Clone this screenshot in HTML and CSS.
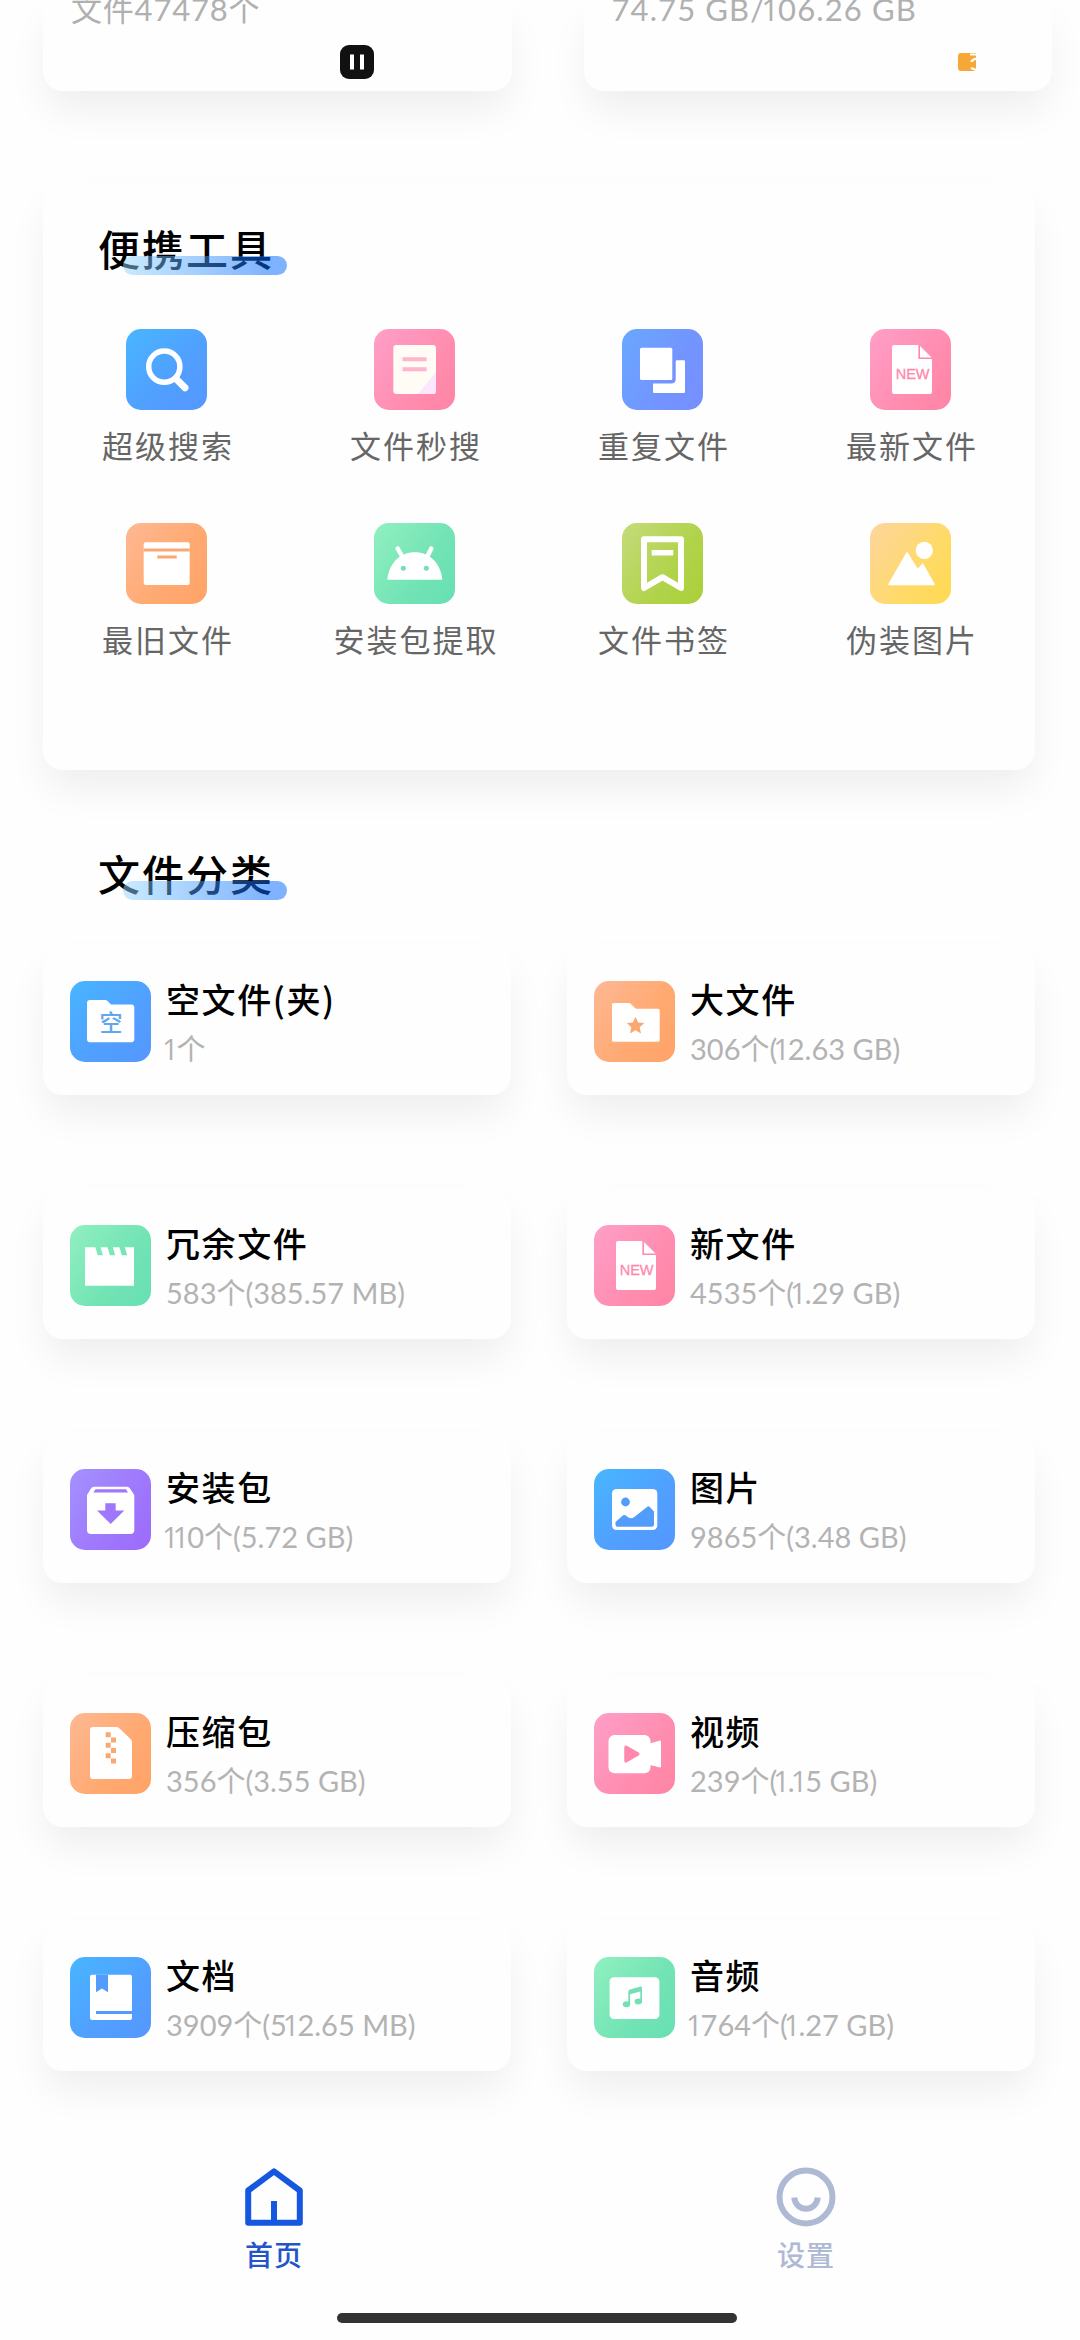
FILE: index.html
```html
<!DOCTYPE html>
<html lang="zh-CN">
<head>
<meta charset="utf-8">
<title>文件管理</title>
<link rel="stylesheet" href="styles.css">
</head>
<body>
<div class="statusbar">
  <svg class="pause" viewBox="0 0 34 34"><rect width="34" height="34" rx="9" fill="#111"/><path d="M10 9.5h4v15h-4zM20 9.5h4v15h-4z" fill="#fff"/></svg>
  <svg class="chip" viewBox="0 0 18 18"><path d="M3 0H18V18H3Q0 18 0 15V3Q0 0 3 0Z" fill="#f5a838"/><path d="M12 1.5H18M18 5.5Q13.5 7 13.5 9M13 15L18 17" stroke="#fff" stroke-width="2.2" fill="none"/></svg>
</div>
<main class="page">
  <section class="summary">
    <div class="card summary-card"><p>文件47478个</p></div>
    <div class="card summary-card total"><p>74.75 GB/<i>1</i>06.26 GB</p></div>
  </section>

  <section class="card tools">
    <h2 class="heading">便携工具</h2>
    <div class="tool-grid">
      <div class="tool"><svg class="icon blue" viewBox="0 0 81 81"><circle cx="38.3" cy="37.7" r="15.6"/><path d="M50 49.8L59 58.7"/></svg><span>超级搜索</span></div>
      <div class="tool"><svg class="icon pink" viewBox="0 0 81 81"><rect x="19.3" y="16" width="42.7" height="49" rx="3" fill="#fffbf5"/><path d="M62 43V62Q62 65 59 65H44Z" fill="#fbe6fb"/><path d="M28.5 30.3H52.7M28.5 40.3H52.7" fill="none" stroke="#ffb5cb" stroke-width="4"/></svg><span>文件秒搜</span></div>
      <div class="tool"><svg class="icon indigo" viewBox="0 0 81 81"><rect x="18" y="18.7" width="32.3" height="32.3" rx="1.5"/><path d="M55 31.3H62Q63 31.3 63 32.3V63Q63 64 62 64H32Q31 64 31 63V54.5H50Q53.7 54 53.7 50.5V32.3Q53.7 31.3 55 31.3Z"/></svg><span>重复文件</span></div>
      <div class="tool"><svg class="icon pink" viewBox="0 0 81 81"><path d="M24 16H49L62 29V63Q62 65 60 65H24Q22 65 22 63V18Q22 16 24 16Z"/><path d="M49.2 16V29.2H62" class="cut thin"/><text x="42.6" y="49.5" class="new">NEW</text></svg><span>最新文件</span></div>
      <div class="tool"><svg class="icon orange" viewBox="0 0 81 81"><rect x="17.7" y="19.3" width="46" height="42.7" rx="2"/><path d="M17.7 27H63.7M31.3 34H50.7" class="cut"/></svg><span>最旧文件</span></div>
      <div class="tool"><svg class="icon green" viewBox="0 0 81 81"><path d="M13.3 56.7C15 40 26 29.3 40.8 29.3S66.6 40 68.3 56.7Z"/><path d="M29 35L23.7 25.5M52.5 35L57.3 25.5" stroke="#fff" stroke-width="4.5" stroke-linecap="round"/><circle cx="29.3" cy="45.3" r="2.5" class="tint"/><circle cx="52.3" cy="45.3" r="2.5" class="tint"/></svg><span>安装包提取</span></div>
      <div class="tool"><svg class="icon lime" viewBox="0 0 81 81"><path d="M22 16.3H59V65L40.5 54.2L22 65Z" class="line" stroke-width="6"/><path d="M29.7 29.7H51.3" class="line" stroke-width="5.5"/></svg><span>文件书签</span></div>
      <div class="tool"><svg class="icon yellow" viewBox="0 0 81 81"><circle cx="54.3" cy="27.3" r="8.6"/><path d="M37 30L47.6 47L52.7 41.3L64 61.5H19Z" stroke="#fff" stroke-width="1.6" stroke-linejoin="round"/></svg><span>伪装图片</span></div>
    </div>
  </section>

  <h2 class="heading classes-heading">文件分类</h2>
  <section class="classes">
    <div class="card entry"><svg class="icon blue" viewBox="0 0 81 81"><path d="M20 19H35.5Q37 19 38 20.5L41 23.5H61.3Q64.3 23.5 64.3 26.5V58.3Q64.3 61.3 61.3 61.3H20Q17 61.3 17 58.3V22Q17 19 20 19Z"/><text x="41" y="49.8" class="empty">空</text></svg><div class="info"><h3>空文件(夹)</h3><p><i>1</i>个</p></div></div>
    <div class="card entry"><svg class="icon orange" viewBox="0 0 81 81"><path d="M19.5 22H35.6L42 27.7H64.2Q65.7 27.7 65.7 29.2V59.2Q65.7 60.7 64.2 60.7H19.5Q18 60.7 18 59.2V23.5Q18 22 19.5 22Z"/><path class="tint" d="M41.5 35.7L44.1 41.4L50.3 42.1L45.7 46.2L47 52.4L41.5 49.3L36 52.4L37.3 46.2L32.7 42.1L38.9 41.4Z"/></svg><div class="info"><h3>大文件</h3><p>306个(<i>1</i>2.63 GB)</p></div></div>
    <div class="card entry"><svg class="icon green" viewBox="0 0 81 81"><path d="M15 22.3H25.3L27.7 30.3H33L30.6 22.3H37.5L39.9 30.3H45.2L42.8 22.3H49.5L51.9 30.3H57.2L54.8 22.3H64V60.7H15Z"/></svg><div class="info"><h3>冗余文件</h3><p>583个(385.57 MB)</p></div></div>
    <div class="card entry"><svg class="icon pink" viewBox="0 0 81 81"><path d="M24 16H49L62 29V63Q62 65 60 65H24Q22 65 22 63V18Q22 16 24 16Z"/><path d="M49.2 16V29.2H62" class="cut thin"/><text x="42.6" y="49.5" class="new">NEW</text></svg><div class="info"><h3>新文件</h3><p>4535个(<i>1</i>.29 GB)</p></div></div>
    <div class="card entry"><svg class="icon purple" viewBox="0 0 81 81"><path d="M24 17.7H57Q59 17.7 60 19.5L64.3 26V61Q64.3 65 60.3 65H21Q17 65 17 61V26L21 19.5Q22 17.7 24 17.7Z"/><path class="tint" d="M25.5 20.3H56L58 23.4H23.3ZM35.3 34.3H45.7V41.5H54.3L40.7 55L27 41.5H35.3Z"/></svg><div class="info"><h3>安装包</h3><p><i>1</i><i>1</i>0个(5.72 GB)</p></div></div>
    <div class="card entry"><svg class="icon blue" viewBox="0 0 81 81"><rect x="18" y="20" width="45.3" height="41" rx="4.5"/><circle class="tint" cx="31.5" cy="33" r="4.4"/><path class="tint" d="M21.5 53L28 47.2Q30 45 32.2 46.8Q36.5 51 40 48.3L53 38Q54.5 36.5 56 38.3L60 42.5V55.5Q60 57.8 57.7 57.8H23.5Q21.5 57.8 21.5 55.5Z"/></svg><div class="info"><h3>图片</h3><p>9865个(3.48 GB)</p></div></div>
    <div class="card entry"><svg class="icon orange" viewBox="0 0 81 81"><path d="M23 14H46Q48 14 49 15L61 26.5Q62 27.5 62 29V63Q62 66 59 66H23Q20 66 20 63V17Q20 14 23 14Z"/><path class="tint" d="M35.7 19.3h5v5h-5zM41 24.5h5v5h-5zM35.7 29.8h5v5h-5zM41 35h5v5h-5zM35.7 40.2h5v5h-5zM41 45.4h5v5h-5z"/></svg><div class="info"><h3>压缩包</h3><p>356个(3.55 GB)</p></div></div>
    <div class="card entry"><svg class="icon pink" viewBox="0 0 81 81"><rect x="14.5" y="22" width="42" height="38.3" rx="6"/><path d="M54 31L66 27.5Q67 27.5 67 28.7V53.3Q67 54.5 66 54.5L54 51.5Z"/><path class="tint" d="M32 34.2L43.8 41L32 47.8Z" stroke="var(--tint)" stroke-width="3.5" stroke-linejoin="round"/></svg><div class="info"><h3>视频</h3><p>239个(<i>1</i>.<i>1</i>5 GB)</p></div></div>
    <div class="card entry"><svg class="icon blue" viewBox="0 0 81 81"><rect x="20" y="17.7" width="42" height="45.3" rx="2"/><path class="tint" d="M26 17.7H38V35.3L32 31.5L26 35.3ZM26 54H62V57H26Z"/></svg><div class="info"><h3>文档</h3><p>3909个(5<i>1</i>2.65 MB)</p></div></div>
    <div class="card entry"><svg class="icon green" viewBox="0 0 81 81"><rect x="15.6" y="20.3" width="49.8" height="41.7" rx="4.5"/><g class="tint"><ellipse cx="32.5" cy="47.2" rx="3.7" ry="3"/><ellipse cx="44.3" cy="44.5" rx="3.7" ry="3"/><path d="M34.3 34.5Q34.3 33 36 32.4L46.5 29.6Q48 29.3 48 31V44.5H46.3V34.6L36.1 37.2V47.2H34.3Z"/></g></svg><div class="info"><h3>音频</h3><p><i>1</i>764个(<i>1</i>.27 GB)</p></div></div>
  </section>
</main>
<nav class="tabs">
  <a class="tab active"><svg viewBox="0 0 58 58"><path d="M3.2 22.5L29 3.4L54.8 22.5V54.7H3.2ZM29 33V54.7"/></svg><span>首页</span></a>
  <a class="tab"><svg viewBox="0 0 58 58"><circle cx="29" cy="29" r="26.5"/><path d="M17.2 29.5C19 44.5 39 44.5 40.8 29.5"/></svg><span>设置</span></a>
</nav>
<div class="home-indicator"></div>
</body>
</html>
```
FILE: styles.css
```css
* { box-sizing: border-box; margin: 0; padding: 0; }

body {
  width: 1080px;
  height: 2340px;
  overflow: hidden;
  position: relative;
  display: flex;
  flex-direction: column;
  background: #fefefe;
  color: #000;
  font-family: "Noto Sans CJK SC", sans-serif;
}

.statusbar {
  position: absolute;
  z-index: 2;
  top: 45px;
  left: 340px;
  width: 636px;
  height: 34px;
  display: flex;
  align-items: center;
  justify-content: space-between;
}
.pause { width: 34px; height: 34px; }
.chip { width: 18px; height: 18px; }

.page { height: 2152px; padding: 0 45px 0 43px; }

.card {
  background: #fefefe;
  border-radius: 20px;
  box-shadow: 0 22px 40px -4px rgba(0, 0, 0, 0.065);
}

.summary { display: flex; gap: 72px; width: 1009px; height: 91px; }
.summary-card {
  flex: 1;
  height: 91px;
  padding-left: 28px;
  border-radius: 0 0 20px 20px;
}
.summary-card p {
  margin-top: -14px;
  line-height: 46px;
  font-family: Lato, "Noto Sans CJK SC", sans-serif;
  font-size: 31px;
  letter-spacing: 0.8px;
  color: #b0b0b0;
  white-space: nowrap;
}
.summary-card.total p { letter-spacing: 1.1px; }

.tools { height: 587px; margin-top: 92px; padding-top: 35px; }

.heading {
  position: relative;
  width: max-content;
  margin-left: 55px;
  height: 60px;
  line-height: 60px;
  font-size: 42px;
  font-weight: 500;
  letter-spacing: 2px;
}
.heading::after {
  content: "";
  position: absolute;
  left: 25px;
  top: 38px;
  width: 164px;
  height: 19px;
  border-radius: 10px;
  background: linear-gradient(90deg, rgba(150, 215, 255, 0.5), rgba(0, 102, 255, 0.5) 90%);
}

.tool-grid { display: grid; grid-template-columns: repeat(4, 1fr); grid-auto-rows: 194px; margin-top: 51px; }
.tool { display: flex; flex-direction: column; align-items: center; }
.tool .icon { margin-left: -1px; }
.tool span {
  margin-top: 12px;
  line-height: 46px;
  font-size: 31px;
  letter-spacing: 2px;
  margin-right: -2px;
  color: #666;
}

.icon { display: block; flex: none; width: 81px; height: 81px; border-radius: 15px; fill: #fff; }
.icon.blue { --tint: #529dfb; background: linear-gradient(135deg, #48b6ff, #519fff 60%, #5597ff); }
.icon.pink { --tint: #ff88ad; background: linear-gradient(125deg, #ff9fc8, #ff8db0 60%, #ff84a4); }
.icon.indigo { --tint: #7394ff; background: linear-gradient(120deg, #69a8ff, #7394ff 60%, #7690ff); }
.icon.orange { --tint: #f9a873; background: linear-gradient(125deg, #ffb893, #ffa971 60%, #ffa367); }
.icon.green { --tint: #74dfb4; background: linear-gradient(125deg, #91f0c0, #72e3b5 60%, #67e0b3); }
.icon.lime { --tint: #aed140; background: linear-gradient(125deg, #c5db7c, #b1d34b 60%, #abcf38); }
.icon.yellow { --tint: #ffd95c; background: linear-gradient(125deg, #fdd59e, #ffda69 60%, #ffd94f); }
.icon.purple { --tint: #9f77fc; background: linear-gradient(125deg, #a392ff, #9f77fc 60%, #9b6bfb); }

.icon .tint { fill: var(--tint); }
.icon .cut { fill: none; stroke: var(--tint); stroke-width: 2.8; }
.icon .thin { stroke-width: 1.6; }
.icon .line { fill: none; stroke: #fff; stroke-linejoin: round; }
.icon .new { font: 14.5px "Liberation Sans", sans-serif; text-anchor: middle; fill: var(--tint); stroke: var(--tint); stroke-width: 0.3; }
.icon .empty { font: 500 23px "Noto Sans CJK SC", sans-serif; text-anchor: middle; fill: #62a6ee; }
.tool:first-child .icon { fill: none; stroke: #fff; stroke-width: 5.5; stroke-linecap: round; }
.tool:first-child .icon path { stroke-width: 7; }

.classes-heading { margin-top: 73px; }
.classes {
  display: grid;
  grid-template-columns: 1fr 1fr;
  grid-auto-rows: 150px;
  gap: 94px 56px;
  margin-top: 42px;
}
.entry { display: flex; align-items: flex-start; padding: 36px 0 0 27px; gap: 15px; }
.info { display: flex; flex-direction: column; }
.info h3 {
  margin-top: -6px;
  line-height: 48px;
  font-size: 34px;
  font-weight: 500;
  letter-spacing: 1.6px;
}
.info p {
  margin-top: 2px;
  line-height: 48px;
  font-family: Lato, "Noto Sans CJK SC", sans-serif;
  font-size: 29px;
  color: #b3b3b3;
  white-space: nowrap;
}

/* proportional-width figure one */
p i {
  margin: 0 -2px 0 -4px;
  font-family: "Open Sans", sans-serif;
  font-style: normal;
}

.tabs { display: grid; grid-template-columns: 1fr 1fr; padding: 16px 8px 0; height: 161px; }
.tab { display: flex; flex-direction: column; align-items: center; color: #aeb9d3; }
.tab svg { width: 58px; height: 58px; fill: none; stroke: currentColor; stroke-width: 6; stroke-linejoin: round; overflow: visible; }
.tab span { margin-top: 7px; line-height: 42px; font-size: 28px; font-weight: 500; letter-spacing: 1px; }
.tab.active { color: #1557de; }
.tab.active span { color: #2455c8; }

.home-indicator { width: 400px; height: 10px; margin-left: 337px; border-radius: 5px; background: #333; }
```
